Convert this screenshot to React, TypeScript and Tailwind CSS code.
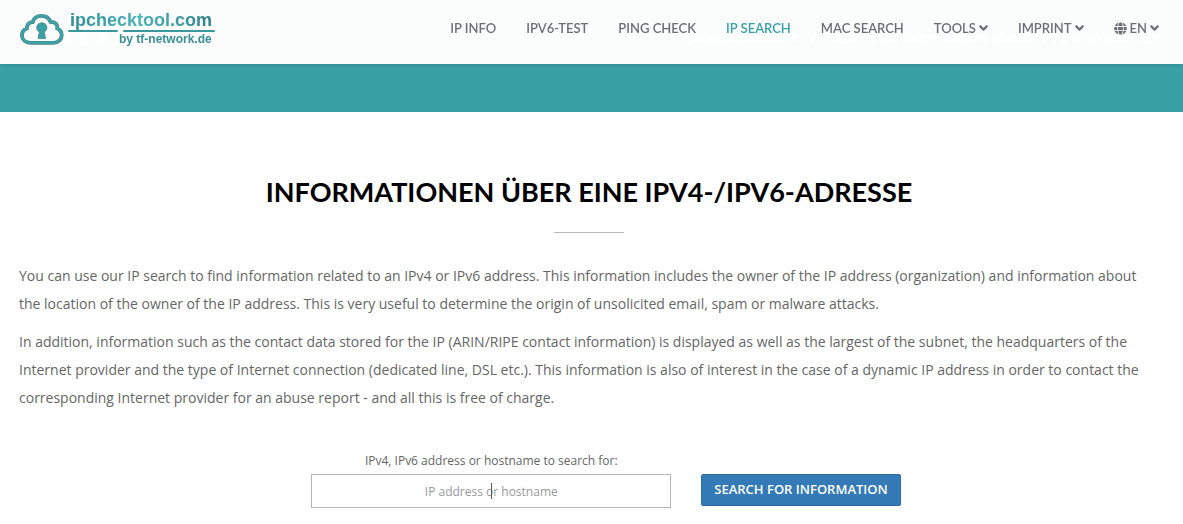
import React, { useState } from "react";
import { FaAngleDown, FaGlobe } from "react-icons/fa";

interface NavItem {
  label: string;
  active?: boolean;
  menu?: boolean;
  globe?: boolean;
}

const navItems: NavItem[] = [
  { label: "IP Info" },
  { label: "IPv6-Test" },
  { label: "Ping Check" },
  { label: "IP Search", active: true },
  { label: "MAC Search" },
  { label: "Tools", menu: true },
  { label: "Imprint", menu: true },
  { label: "EN", menu: true, globe: true },
];

const cloud =
  "M11 31.5C5.500 31.500 2 28 2 23.500C2 20 4 17.300 7 16.200C6.800 12 9.300 9.300 13 9.300C14.300 5 17.500 2.500 22 2.500C26.500 2.500 30 5 31.500 9C36.500 9 39 12 38.500 16.200C41.500 17.500 43 20 43 23.500C43 28 39.500 31.500 34.500 31.500Z";

const Logo = () => (
  <svg viewBox="0 0 196 48" className="h-12 w-49" role="img" aria-label="ipchecktool.com by tf-network.de">
    <defs>
      <linearGradient id="teal" x1="0" y1="0" x2="1" y2="0">
        <stop offset="0" stopColor="#2f8f95" />
        <stop offset="0.5" stopColor="#4cb4ba" />
        <stop offset="1" stopColor="#2f8288" />
      </linearGradient>
    </defs>
    <g transform="translate(0 5.500) scale(0.970 0.930)">
      <path d={cloud} fill="none" stroke="#57797d" strokeWidth="4" />
      <path d={cloud} fill="none" stroke="#39a5aa" strokeWidth="2.800" />
      <path
        d="M22.500 10A5.200 5.200 0 0 1 25 19.800L26.300 27H18.700L20 19.800A5.200 5.200 0 0 1 22.500 10Z"
        fill="#39a0a6"
        stroke="#4f8f94"
      />
    </g>
    <text x="50" y="18" fontFamily="Liberation Sans" fontSize="18" fontWeight="700" fill="url(#teal)">
      ipchecktool.com
    </text>
    <path d="M49 23H97M104 23H194" stroke="#3b989e" strokeWidth="2" strokeLinecap="round" />
    <text x="99" y="35" fontFamily="Liberation Sans" fontSize="12" fontWeight="700" fill="#388f96">
      by tf-network.de
    </text>
  </svg>
);

const App = () => {
  const [host, setHost] = useState("");

  return (
    <div className="min-h-screen bg-white font-['Open_Sans',sans-serif] text-[#666]">
      {/* header stays over the banner, which shines through a little */}
      <header className="fixed inset-x-0 top-0 z-10 flex h-16 items-center justify-between bg-white/98 pr-6 pl-5 shadow-[0_0_4px_rgba(0,0,0,0.2)]">
        <a href="#" className="block">
          <Logo />
        </a>
        <nav className="flex gap-[30px] pb-2 font-['Lato',sans-serif] text-[13px] leading-5 font-semibold uppercase">
          {navItems.map((item) => (
            <a
              key={item.label}
              href="#"
              className={item.active ? "text-[#39a0a6]" : "flex items-center gap-[3px] text-[#6b7173]"}
            >
              {item.globe && <FaGlobe className="size-[13px]" />}
              {item.label}
              {item.menu && <FaAngleDown className="h-[14px] w-[9px]" />}
            </a>
          ))}
        </nav>
      </header>
      <div className="flex h-28 items-start justify-between bg-[#39a0a6] pt-7 pr-6 pl-[19px] font-bold text-white">
        <p className="text-base leading-5 tracking-[8px] uppercase">IP Search</p>
        <ol className="flex gap-3 text-sm leading-5">
          <li>ipchecktool.com</li>
          <li>/</li>
          <li>Search for information about IPv4/IPv6 address</li>
        </ol>
      </div>

      <main className="pt-15 pr-6 pb-4 pl-[19px]">
        <h1 className="text-center font-['Lato',sans-serif] text-[27px] leading-10 font-bold text-black uppercase">
          Informationen über eine IPv4-/IPv6-Adresse
        </h1>
        <hr className="mx-auto mt-5 w-[70px] border-[#bbb]" />
        <div className="mt-[29px] space-y-[10px] text-sm leading-7">
          <p>
            You can use our IP search to find information related to an IPv4 or IPv6 address. This information
            includes the owner of the IP address (organization) and information about the location of the owner of
            the IP address. This is very useful to determine the origin of unsolicited email, spam or malware attacks.
          </p>
          <p>
            In addition, information such as the contact data stored for the IP (ARIN/RIPE contact information) is
            displayed as well as the largest of the subnet, the headquarters of the Internet provider and the type of
            Internet connection (dedicated line, DSL etc.). This information is also of interest in the case of a
            dynamic IP address in order to contact the corresponding Internet provider for an abuse report - and all
            this is free of charge.
          </p>
        </div>

        <form
          className="mt-[39px] flex items-end justify-center gap-[30px] pl-[34px]"
          onSubmit={(e) => e.preventDefault()}
        >
          <div className="flex w-[360px] flex-col text-center text-xs">
            <label htmlFor="host" className="leading-5">
              IPv4, IPv6 address or hostname to search for:
            </label>
            <div className="relative mt-[3px]">
              <input
                id="host"
                autoFocus
                value={host}
                placeholder="IP address or hostname"
                className="h-[34px] w-full border border-[#b5b5b5] text-center caret-transparent outline-none placeholder:text-[#999]"
                onChange={(e) => setHost(e.target.value)}
              />
              {!host && <span className="pointer-events-none absolute inset-y-[9px] left-1/2 w-px bg-[#555]" />}
            </div>
          </div>
          <button className="mb-[2px] h-8 rounded-xs border border-[#2e6da4] bg-[#337ab7] px-3 text-[13px] font-semibold text-white uppercase">
            Search for information
          </button>
        </form>
      </main>
    </div>
  );
};

export default App;
